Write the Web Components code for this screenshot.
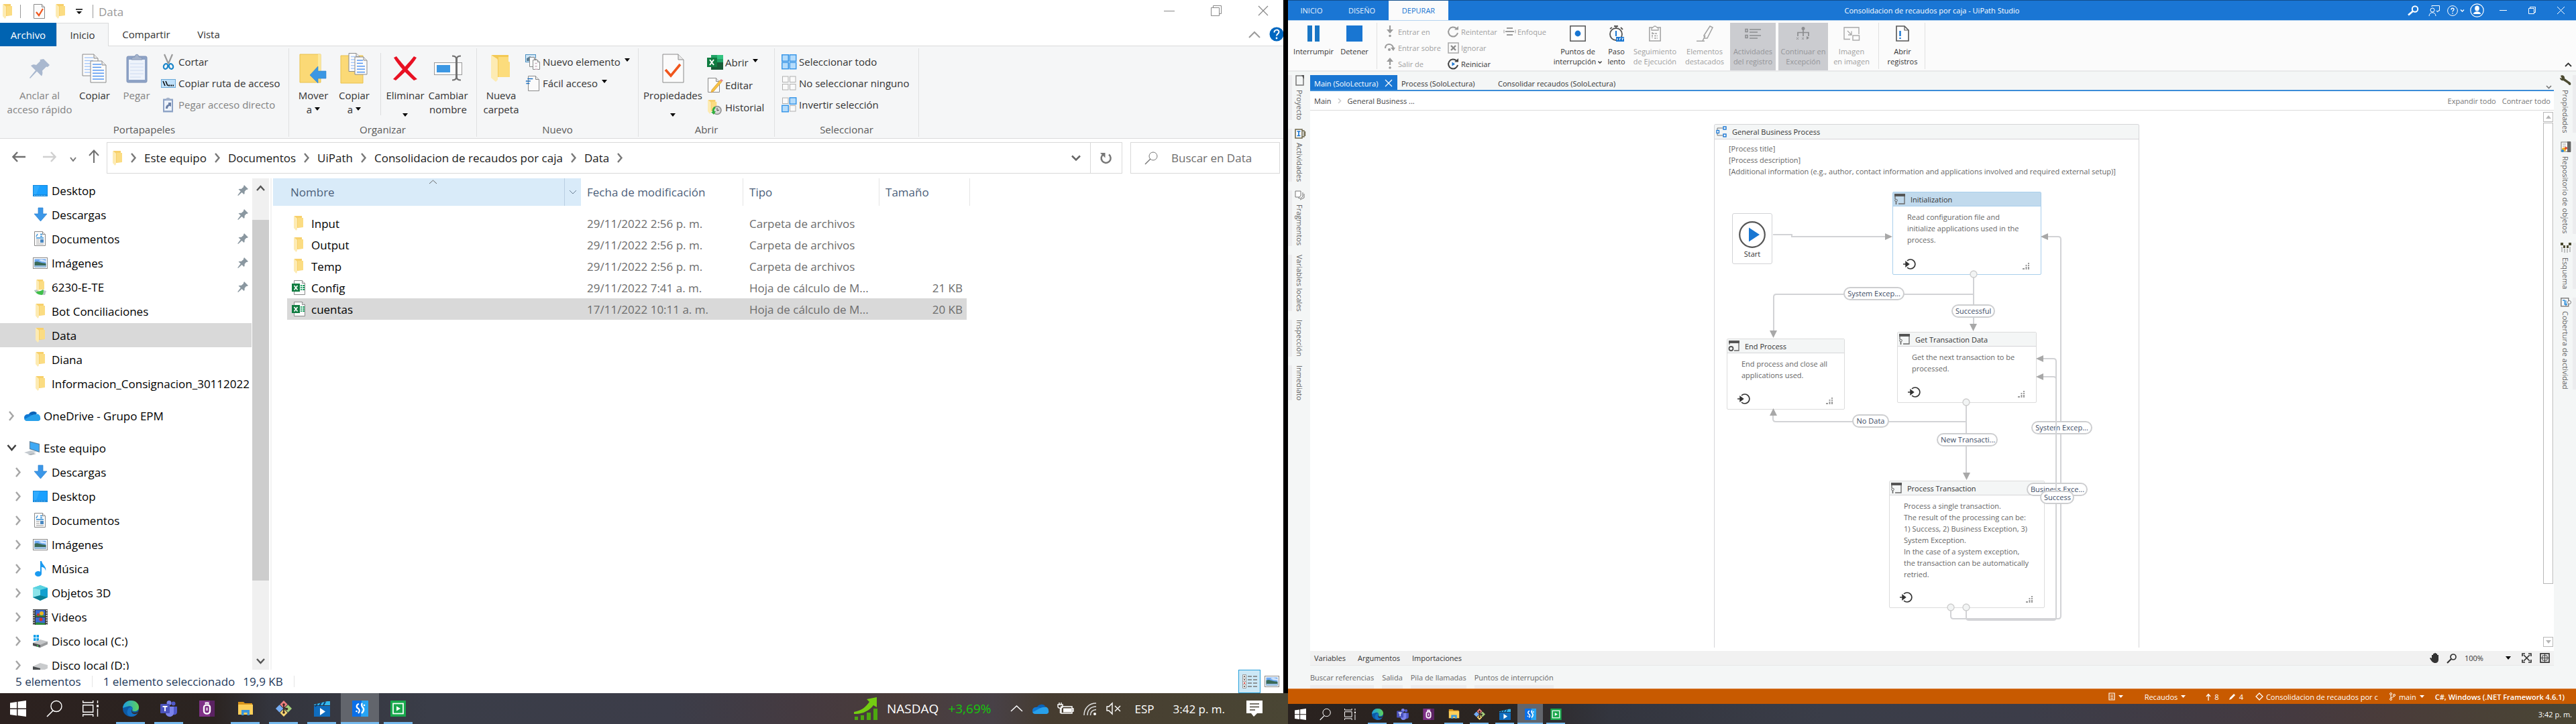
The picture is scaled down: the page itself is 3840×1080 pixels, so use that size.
<!DOCTYPE html>
<html lang="es">
<head>
<meta charset="utf-8">
<title>Data</title>
<style>
html,body{height:100%}
body{margin:0;background:#000;font-family:"Open Sans","Noto Sans",sans-serif;font-size:17px;overflow:hidden}
</style>
</head>
<body>
<desk-top>
  <explorer-window></explorer-window>
  <task-bar slot="bar1"></task-bar>
  <studio-window slot="right"></studio-window>
  <task-bar slot="bar2" small></task-bar>
</desk-top>
<script>
/* ---------- icons ---------- */
const page=(x,y,w,h,f,c='#3b8df0',n=0)=>{
  let s=`<path d="M${x} ${y}h${w-f}l${f} ${f}v${h-f}h-${w}z" fill="#fbfbfb" stroke="#8a8a8a"/><path d="M${x+w-f} ${y}v${f}h${f}" fill="#e8e8e8" stroke="#8a8a8a"/>`;
  for(let i=0;i<n;i++)s+=`<path d="M${x+3} ${y+5+i*4.4}h${i<2?w-f-4:w-6}" stroke="${c}" stroke-width="1.4"/>`;
  return s};
const folder=(x,y,k=1)=>`<g transform="translate(${x} ${y}) scale(${k})"><path d="M1 0h11v3l1 1 1 13-9 1z" fill="#f7d06b"/><path d="M6 3h8v14H6z" fill="#fbdc82"/><path d="M0 0l4 3c1 .6 1 1 1 2v15l-1.600 2L0 18z" fill="#fdebb3"/></g>`;
const x10=`<path d="M1 1l14 14M15 1L1 15" stroke="#888" stroke-width="1.200" fill="none"/>`;
const chevR=(c,w=2.4)=>`<path d="M1 1l5.500 6.500L1 14" fill="none" stroke="${c}" stroke-width="${w}"/>`;
const ICONS={
 folder:[15,22,folder(0,0)],
 folderBig:[32,42,`<path d="M2 1h25v10l2 1v22h-19z" fill="#f3c955"/><path d="M12 4h15v7l2 1v22H12z" fill="#fcdc7c"/><path d="M1 1l8 5c2 1 2 2 2 4v28l-3 3-7-6z" fill="#fdebb3"/>`],
 docCheck:[18,23,page(.5,.5,16,21,4)+`<path d="M4 12l4 5 6-10" fill="none" stroke="#f0561d" stroke-width="2.200"/>`],
 customize:[10,8,`<path d="M0 1h10" stroke="#000" stroke-width="1.500"/><path d="M1 4h8l-4 4z" fill="#000"/>`],
 winMin:[16,16,`<path d="M0 8.500h16" stroke="#888"/>`],
 winMax:[16,16,`<path d="M.5 3.500h12v12H.5zM3.500 3.500v-3h12v12h-3" fill="none" stroke="#888"/>`],
 winClose:[16,16,x10],
 chevUp:[18,11,`<path d="M1 10l8-8 8 8" fill="none" stroke="#9a9a9a" stroke-width="2"/>`],
 help:[22,22,`<circle cx="11" cy="11" r="10.500" fill="#0067c0"/><path d="M7.500 8.500c0-5 7-5 7-1 0 3-3.500 3-3.500 6" stroke="#fff" stroke-width="2" fill="none"/><circle cx="11" cy="17" r="1.400" fill="#fff"/>`],
 pinBig:[32,32,`<path d="M22 1l9 9-3 3-2-.5-6 6c1 4 0 6-1 8l-7-7L2 30l-1-1 9-11-7-7c3-2 5-2 8-1l6-6-.5-2z" transform="translate(0 1)" fill="#a9b8cf"/>`],
 copyBig:[38,44,page(1,1,23,32,6,'#a6c8fa',6)+page(13,11,23,32,6,'#4a90f0',6)],
 paste:[32,44,`<rect x="1" y="4" width="30" height="39" rx="2" fill="#8ea3c6" stroke="#7d92b7"/><rect x="4" y="9" width="24" height="30" fill="#eef3fb"/><path d="M6 15h20M6 20h20M6 25h20M6 30h20M6 35h16" stroke="#cddaf0"/><path d="M8 9c0-4 3-4 5-4 0-5 6-5 6 0 2 0 5 0 5 4z" fill="#a6b4cc" stroke="#8497b8"/>`],
 cut:[18,23,`<path d="M3 0l6 14M15 0L9 14" stroke="#9a9a9a" stroke-width="2.200"/><ellipse cx="5" cy="18" rx="3" ry="4" fill="none" stroke="#1a85c9" stroke-width="2.200" transform="rotate(20 5 18)"/><ellipse cx="13" cy="18" rx="3" ry="4" fill="none" stroke="#1a85c9" stroke-width="2.200" transform="rotate(-20 13 18)"/>`],
 copyPath:[22,13,`<rect x=".5" y=".5" width="21" height="12" fill="#bfe0fa" stroke="#6aa9d8"/><path d="M3 3l3 7M7 3l3 7" stroke="#000" stroke-width="1.500"/><path d="M11 9.500h8" stroke="#000" stroke-width="1.800" stroke-dasharray="2 1.200"/>`],
 pasteLink:[18,23,`<rect x="1" y="2.500" width="15" height="20" fill="#8ea3c6"/><rect x="3" y="5" width="11" height="15" fill="#eef3fb"/><path d="M5.500 2.500C5.500 0 11.500 0 11.500 2.500V4.500h-6z" fill="#a6b4cc"/><path d="M5 17c0-4 2-6 4-6V8h4v6l-2-1c-2 0-3 2-3 4z" fill="#6b80a6"/>`],
 moveTo:[42,44,`<path d="M1 1h31v42H1z" fill="#fbd976" stroke="#e9c14d"/><path d="M28 1h4v25h-4z" fill="#fce89c"/><path d="M40 27H28v-7L16 33l12 12v-7h12z" transform="translate(0 -1)" fill="#3b97e3" stroke="#2b83cf" stroke-width=".6"/>`],
 copyTo:[42,46,`<path d="M1 4h33v41H1z" fill="#fbd976" stroke="#e9c14d"/>`+page(13,.5,16,27,5,'#a6c8fa',5)+page(22,6,18,26,5,'#4a90f0',5)],
 del:[38,38,`<path d="M2 3l4-2c5 7 20 24 31 34l-5 2C22 28 9 15 2 3z" fill="#e81123"/><path d="M36 3l-4-2C26 9 12 24 1 35l4 2C16 28 30 13 36 3z" fill="#e81123"/>`],
 rename:[42,40,`<rect x=".5" y="11.500" width="41" height="18" fill="#fbfbfb" stroke="#9a9a9a"/><rect x="4" y="15" width="20" height="11" fill="#3b97e3"/><path d="M27 1.500c4 0 6 1 6 4v28c0 3-2 4-6 4M40 1.500c-4 0-6 1-6 4v28c0 3 2 4 6 4" stroke="#707070" stroke-width="2" fill="none"/>`],
 newItem:[22,23,`<rect x=".5" y=".5" width="15" height="11" fill="#cfe6f7" stroke="#4a8fc0"/><path d="M2 10V6l5-3 7 5v2z" fill="#5b7f95"/>`+page(6.5,4.500,10,14,3)+page(11.5,8.500,10,14,3,'#c8a8b8',3)],
 easy:[20,23,page(3.5,.5,16,22,5)+`<path d="M2 4.500h8M0 8h7M1 11.500h5" transform="skewX(-8) translate(1)" stroke="#1a6fc0" stroke-width="1.600"/>`],
 propsBig:[33,44,page(1,1,31,42,8)+`<path d="M5 24l8 9 14-17" fill="none" stroke="#f0561d" stroke-width="3.600"/>`],
 excelBig:[24,22,`<path d="M6 0h18v22H6z" fill="#21a366"/><path d="M15 0h9v6h-9z" fill="#33c481"/><path d="M15 6h9v5h-9z" fill="#21a366"/><path d="M6 11h9v6H6z" fill="#107c41"/><path d="M15 11h9v11h-9zM6 16h18v6H6z" fill="#185c37"/><rect y="4" width="15" height="14" fill="#107c41"/><path d="M4 7l6 8M10 7l-6 8" stroke="#fff" stroke-width="2"/>`],
 edit:[22,22,page(.5,.5,17,21,5)+`<path d="M18 4l3 2L9 20l-4 2 1-4z" fill="#f6c445" stroke="#d9912a" stroke-width=".7"/><path d="M18 4l2-2 3 2-2 2z" fill="#e58a8a"/>`],
 history:[22,22,folder(0,0,.95)+`<circle cx="14" cy="15.500" r="6" fill="#d8d8d8" stroke="#8a8a8a" stroke-width="1.500"/><path d="M14 12v4l3-1" stroke="#444" fill="none"/><path d="M10 10c-3 2-4 5-3 8l-2 0 4 4 3-5h-2c-1-2 0-4 2-5z" fill="#2fae3c"/>`],
 selAll:[22,22,[[0,0],[11.5,0],[0,11.5],[11.5,11.5]].map(([x,y])=>`<rect x="${x+.75}" y="${y+.75}" width="9.500" height="9.500" fill="#b5dcfb" stroke="#3a97e8" stroke-width="1.500"/>`).join('')],
 selNone:[22,22,[[1,0],[12,0],[1,11.5],[12,11.5]].map(([x,y])=>`<rect x="${x+.5}" y="${y+1}" width="8.500" height="8.500" fill="#fafafa" stroke="#b0b0b0"/>`).join('')],
 selInv:[22,22,[[1,0,0],[11.5,0,1],[0,11.5,1],[12,11.5,0]].map(([x,y,s])=>s?`<rect x="${x+.75}" y="${y+.75}" width="9.500" height="9.500" fill="#b5dcfb" stroke="#3a97e8" stroke-width="1.500"/>`:`<rect x="${x+.5}" y="${y+1}" width="8.500" height="8.500" fill="#fafafa" stroke="#b0b0b0"/>`).join('')],
 back:[20,16,`<path d="M1 8h19M8 1L1.500 8 8 15" fill="none" stroke="#707070" stroke-width="2.500"/>`],
 fwd:[20,16,`<path d="M0 8h19M12 1l6.500 7-6.500 7" fill="none" stroke="#d0d0d0" stroke-width="2.500"/>`],
 navDown:[10,8,`<path d="M1 1l4 5 4-5" fill="none" stroke="#777" stroke-width="2"/>`],
 navUp:[16,20,`<path d="M8 20V2M1 9l7-7.500L15 9" fill="none" stroke="#707070" stroke-width="2"/>`],
 crumb:[8,15,chevR('#777')],
 boxDown:[14,10,`<path d="M1 1.500l6 6 6-6" fill="none" stroke="#666" stroke-width="2.500"/>`],
 refresh:[18,18,`<path d="M13 3.500a7 7 0 1 1-8-.5" fill="none" stroke="#777" stroke-width="2.500"/><path d="M0 1h7.500v7.500z" fill="#777"/>`],
 search:[19,19,`<circle cx="12" cy="7" r="6" fill="none" stroke="#777"/><path d="M8 11l-8 8" stroke="#777" stroke-width="1.400"/>`],
 desktop:[22,17,`<rect width="22" height="17" fill="#1288dd"/><rect x="1" y="1" width="20" height="13" fill="#1aa0ff"/><path d="M1 1h9L5 14H1z" fill="#2fabff"/><path d="M2 15.500h18" stroke="#bfe4ff" stroke-dasharray="1 1.500"/>`],
 down:[19,20,`<path d="M6 0h7v9h6l-9.500 11L0 9h6z" fill="#3b97e8" stroke="#2a7fcf" stroke-width=".7"/>`],
 docs:[18,23,page(.5,.5,16,21,4)+`<path d="M5 4l-2 4M9 4.500h3M9 7.500h3M3 10h11" stroke="#2a8ad6" stroke-width="1.300"/><path d="M3 13h5M3 16h5M3 19h11" stroke="#999" stroke-width="1.200"/><rect x="9" y="12" width="5" height="5" fill="#4a88c0"/>`],
 images:[22,17,`<rect x=".5" y=".5" width="21" height="16" fill="#fff" stroke="#8a8a8a"/><rect x="2.500" y="2.500" width="17" height="12" fill="#6fa8ef"/><path d="M2.500 7c5-2 6 1 17 2v5.500h-17z" fill="#3a6a58"/><path d="M2.500 12h17v2.500h-17z" fill="#9fc3ea"/><path d="M9 4c4-2 8 0 10.500 1v2c-4-1-7 0-10.500-3z" fill="#d9e9fb"/>`],
 netFolder:[18,23,folder(3,0,.85)+`<path d="M0 16c5 2 9 2 13-1l3 3-4 5c-4 0-7-1-9-3z" fill="#3fbf4a"/><path d="M0 16l4-1 2 2-3 2zM14 16l4 1-2 6h-3z" fill="#b9c3c8"/>`],
 music:[17,23,`<ellipse cx="5" cy="19" rx="5" ry="4" fill="#1a9af0"/><path d="M8 0h2c1 6 8 8 6 15 0-4-3-6-6-6v10H8z" fill="#1a9af0"/>`],
 cube:[22,23,`<path d="M0 4l11-4 11 4v14l-11 5L0 18z" fill="#35c3d9"/><path d="M11 6l11-2v14l-11-3z" fill="#12a0cf"/><path d="M0 4l11 2v9L0 18z" fill="#8be4ea"/><path d="M0 4l11-4 11 4-11 3z" fill="#59d2e0"/><path d="M0 18l11-3 11 3-11 5z" fill="#0a7f94"/>`],
 videos:[22,23,`<rect width="22" height="23" fill="#333"/><path d="M1.500 1v22M20.500 1v22" stroke="#ddd" stroke-width="2" stroke-dasharray="2 1.500"/><rect x="4" y="1" width="14" height="10" fill="#3a6ad0"/><rect x="4" y="12" width="14" height="11" fill="#3a6ad0"/><path d="M4 9c4-3 7 1 14 0v2H4zM4 20c4-2 8 1 14 0v3H4z" fill="#2f8a3e"/><circle cx="13" cy="6" r="3" fill="#e8b81f"/><circle cx="8" cy="8" r="2" fill="#d2332a"/><circle cx="12" cy="15" r="2.500" fill="#d2332a"/>`],
 diskC:[23,19,`<path d="M1 0h3.500v4H1zM5.500 0H9v4H5.500zM1 5h3.500v4H1zM5.500 5H9v4H5.500z" fill="#12a0ea"/><path d="M0 12l11-5 11 3v4l-11 5-11-3z" fill="#c4c6c8"/><path d="M0 12l11 3v4L0 16z" fill="#4a4d4f"/><path d="M11 15l11-5v4l-11 5z" fill="#9a9c9e"/><path d="M7 15.500v2" stroke="#3fe05a" stroke-width="1.600"/>`],
 diskD:[23,19,`<path d="M0 11l11-5 11 3v5l-11 5-11-3z" fill="#c9cbcd"/><path d="M0 11l11 3v5L0 16z" fill="#4a4d4f"/>`],
 pin:[16,16,`<path d="M10 0l6 6-2 1-1 0-2.500 3c.5 2 0 3-.8 4L6.500 11 1 16l-.8-.8L4.700 9.300 1.500 6.500C3 5.500 4 5.500 5.500 6L9 3l0-1z" fill="#8a97a0"/>`],
 oneDrive:[25,16,`<path d="M7 6a7 6 0 0 1 12-2L14 12 3 9z" fill="#0a63b8"/><path d="M5 6c6-1 9 3 12 6l-6 4H5A5 5 0 0 1 5 6z" fill="#0f78d4"/><path d="M17 6a5 5 0 0 1 7 5c1 3-1 5-4 5H4c-2 0-3-1-4-3 6-1 10-7 17-7z" fill="#28a0ea"/>`],
 pc:[24,21,`<path d="M8 0l15 4v13L8 12z" fill="#5a7e9a"/><path d="M9 1.500l13 3.500v10.500L9 11z" fill="#3fa9f5"/><path d="M0 17l10-3 8 2-9 4z" fill="#c5cbd0"/><path d="M5 20l9-2 4 1-8 2z" fill="#a9b0b5"/>`],
 treeR:[9,15,chevR('#a5a5a5')],
 treeD:[15,10,`<path d="M1.500 1l6 7 6-7" fill="none" stroke="#404040" stroke-width="2.600"/>`],
 sbUp:[13,9,`<path d="M1 8l5.500-6L12 8" fill="none" stroke="#555" stroke-width="2.400"/>`],
 sbDown:[13,9,`<path d="M1 1l5.500 6L12 1" fill="none" stroke="#555" stroke-width="2.400"/>`],
 sortUp:[13,7,`<path d="M1 6l5.500-5L12 6" fill="none" stroke="#666"/>`],
 sortDown:[12,7,`<path d="M1 1l5 5 5-5" fill="none" stroke="#6a7f95"/>`],
 excel:[21,22,page(3.5,.5,16,21,4)+`<rect x="0" y="5" width="12" height="12" fill="#107c41"/><path d="M3.500 8l5 6.500M8.500 8l-5 6.500" stroke="#fff" stroke-width="1.600"/><path d="M13 8h2M16 8h3M13 11h2M16 11h3M13 14h2M16 14h3" stroke="#21a366" stroke-width="1.800"/>`],
 caret:[8,5,`<path d="M0 0h8L4 5z" fill="#000"/>`],
 viewList:[22,22,`<path d="M.5.500h5v5h-5zM.5 5.500h5v5h-5zM.5 10.500h5v5h-5zM.5 15.500h5v5h-5z" fill="#fff" stroke="#999"/><path d="M2 3h2M2 8h2M2 18h2" stroke="#666" stroke-width="2"/><path d="M2 13h2" stroke="#c33" stroke-width="2"/><path d="M8 3h14M8 8h14M8 13h14M8 18h14" stroke="#777" stroke-width="1.300" stroke-dasharray="6 2"/>`],
 /* taskbar */
 win:[24,24,`<path d="M0 3.500L10 2v9.500H0zM11.500 1.800L24 0v11.500H11.500zM0 13h10v9.500L0 21zM11.500 13H24v11l-12.500-1.700z" fill="#fff"/>`],
 tSearch:[24,24,`<circle cx="15" cy="8.500" r="8" fill="none" stroke="#fff" stroke-width="1.400"/><path d="M10 15L1 24" stroke="#fff" stroke-width="1.600"/>`],
 taskView:[24,24,`<path d="M.7 0v3h15V0M.7 24v-3h15v3M.7 6.700h15v10.600H.700zM22.500 0v4M22.500 12v12" fill="none" stroke="#fff" stroke-width="1.400"/><rect x="21" y="6.500" width="3" height="3.500" fill="#fff"/>`],
 edge:[24,24,`<defs><linearGradient id="a"><stop stop-color="#1b9de2"/><stop offset="1" stop-color="#5fd35a"/></linearGradient></defs><circle cx="12" cy="12" r="12" fill="#0c59a4"/><path d="M0 11C1 4 6 0 12 0c8 0 12 5 12 10 0 4-3 6-6.500 6-3 0-4-1-3-3 1-4-4-6-8-4-4 1-6 2-6.500 2z" fill="url(#a)"/><path d="M14 15c0 4 5 6 9 3-2 3-5 6-10 6-4 0-8-4-6-9 1-4 3-5 6-5 2 1 1 2 1 5z" fill="#1470c4"/><path d="M14 13c-1 3 0 5 4 5 2 0 4-1 5-2l-1 3c-3 2-10 2-9-5z" fill="#35302f"/>`],
 teams:[25,24,`<circle cx="19.500" cy="4.500" r="3" fill="#5059c9"/><circle cx="13" cy="3.500" r="3.500" fill="#7b83eb"/><path d="M16 9h9v8c0 4-4 5-6 4z" fill="#5059c9"/><path d="M8 9h12v9c0 8-11 8-12 1z" fill="#7b83eb"/><rect y="5" width="14" height="14" rx="1" fill="#4b53bc"/><path d="M3.500 9h7M7 9v7" stroke="#fff" stroke-width="1.900"/>`],
 purple:[23,24,`<rect width="23" height="24" fill="#7f3187"/><path d="M16 0h7v24h-7z" fill="#5b2262"/><path d="M7 10v5.500c0 5.500 9 5.500 9 0V10c0-4.500-9-4.500-9 0z" fill="none" stroke="#fff" stroke-width="2.400"/><path d="M9.500 5.500V3.500h4v2M11.500 10.500v4.500" fill="none" stroke="#fff" stroke-width="1.800"/>`],
 tFolder:[24,20,`<path d="M1 0h8l2 2h11v4H1z" fill="#d9941a"/><rect x="1" y="4" width="22" height="15" fill="#fccf5a"/><path d="M6 20v-8h12v8h-3.500v-4h-5v4z" fill="#3a96dd"/>`],
 git:[24,24,`<g transform="rotate(45 12 12)"><rect x="3.500" y="3.500" width="8" height="8" fill="#f08080"/><rect x="12.500" y="3.500" width="8" height="8" fill="#a5cf7a"/><rect x="3.500" y="12.500" width="8" height="8" fill="#77aef5"/><rect x="12.500" y="12.500" width="8" height="8" fill="#f7d774"/></g><path d="M12 5v14M12 10l5 4" stroke="#3b2a26" stroke-width="1.800"/><circle cx="12" cy="6" r="1.800" fill="#3b2a26"/><circle cx="12" cy="18" r="1.800" fill="#3b2a26"/><circle cx="16.500" cy="12.500" r="1.800" fill="#3b2a26"/>`],
 clip:[24,24,`<path d="M0 8h24v16H0z" fill="#0f6cbd"/><path d="M0 6L20 1l4 0v6H0z" fill="#35b8ee"/><path d="M5 5l-3 4M11 3l-3 5M17 2l-3 5" stroke="#0a3f73" stroke-width="2"/><path d="M9 11v11l8-5.500z" fill="#fff"/>`],
 studio:[24,24,`<rect width="24" height="24" fill="#0a6fe8"/><path d="M14 0h10v24H13z" fill="#27a4f2"/><path d="M10 5c-4 1-4 5-1.500 6.500s3.500 4 .5 7.500" fill="none" stroke="#fff" stroke-width="2.300"/><path d="M15 4c-3 4 1 5.500 2 8 1 3-1 5-3 7" fill="none" stroke="#fff" stroke-width="2.300"/><circle cx="6.500" cy="16" r="1.300" fill="#fff"/><circle cx="18" cy="7" r="1.300" fill="#fff"/>`],
 assistant:[23,24,`<rect width="23" height="24" fill="#18a84c"/><rect x="4" y="4.500" width="15" height="15" fill="none" stroke="#fff" stroke-width="1.700"/><path d="M9 8.500v7l6-3.500z" fill="#fff"/>`],
 stock:[35,34,`<path d="M0 22c12-2 18-8 23-15l-4-4 15-3v15l-5-3C23 20 12 26 0 25z" fill="#74cc12"/><path d="M1 29h5v5H1zM10 27h5v7h-5zM19 23h6v11h-6zM29 17h6v17h-6z" fill="#4da80f"/>`],
 tUp:[19,10,`<path d="M1 9l8.500-8L18 9" fill="none" stroke="#fff" stroke-width="1.500"/>`],
 batt:[25,18,`<path d="M6 6h16v10H6zM22 9h2v4h-2" fill="none" stroke="#fff" stroke-width="1.500"/><rect x="9" y="8.500" width="12" height="6" fill="#fff"/><path d="M1 3h7v3c0 3-7 3-7 0zM3 0v3M6 0v3M4.500 9v7" fill="none" stroke="#fff" stroke-width="1.400"/>`],
 wifi:[20,19,`<path d="M1 19C1 9 8 1 19 1M6 19c0-8 5-13 13-13M10.500 19c0-5 3-8 8.500-8.500" fill="none" stroke="#ddd" stroke-width="1.500"/><circle cx="17" cy="17" r="2" fill="#fff"/>`],
 mute:[22,18,`<path d="M1 6h3l5-5v16l-5-5H1z" fill="none" stroke="#fff" stroke-width="1.400"/><path d="M13 5l8 8M21 5l-8 8" stroke="#fff" stroke-width="1.400"/>`],
 notif:[24,24,`<path d="M0 0h24v19h-8l-5 5-4-5H0z" fill="#fff"/><path d="M5 5h14M5 9.500h14M5 14h8" stroke="#4a4438" stroke-width="1.500"/>`],
 /* studio */
 pause:[18,24,`<path d="M0 0h7v24H0zM11 0h7v24h-7z" fill="#1976c5"/>`],
 stop:[24,24,`<rect width="24" height="24" fill="#1976d2"/>`],
 stepIn:[14,18,`<path d="M7 0v8" stroke="#9b9b9b" stroke-width="2.200"/><path d="M2 6h10l-5 6z" fill="#9b9b9b"/><circle cx="7" cy="15.500" r="1.800" fill="#9b9b9b"/>`],
 stepOver:[16,14,`<path d="M1 8c0-8 11-8 12 0" stroke="#9b9b9b" stroke-width="2.200" fill="none"/><path d="M9 7h7l-3 5z" fill="#9b9b9b"/><circle cx="7" cy="10" r="2" fill="#9b9b9b"/>`],
 stepOut:[14,18,`<path d="M7 4v7" stroke="#9b9b9b" stroke-width="2.200"/><path d="M2 6h10L7 0z" fill="#9b9b9b"/><circle cx="7" cy="15" r="1.800" fill="#9b9b9b"/>`],
 retry:[17,17,`<path d="M15 10a7 7 0 1 1-2-6.500" fill="none" stroke="#9b9b9b" stroke-width="2"/><path d="M10 5.500h6V0z" fill="#9b9b9b"/>`],
 ignore:[17,17,`<rect x="1" y="1" width="15" height="15" fill="none" stroke="#a8a8a8" stroke-width="1.500"/><path d="M5 5l7 7M12 5l-7 7" stroke="#8b8b8b" stroke-width="2.400"/>`],
 restart:[17,17,`<path d="M15 10a7 7 0 1 1-2-6.500" fill="none" stroke="#444" stroke-width="2"/><path d="M10 5.500h6V0z" fill="#444"/><path d="M6.500 5.500v6l4.500-3z" fill="#1976d2"/>`],
 focus:[17,12,`<path d="M4 1h9M4 11h9M2 6h13" stroke="#9b9b9b" stroke-width="2"/><path d="M0 3.500v5M17 3.500v5" stroke="#9b9b9b"/>`],
 bp:[24,24,`<rect x=".8" y=".8" width="22.400" height="22.400" fill="#fff" stroke="#555" stroke-width="1.500"/><circle cx="12" cy="12" r="4.400" fill="#1976d2"/>`],
 slow:[23,24,`<circle cx="11" cy="13" r="9" fill="none" stroke="#555" stroke-width="1.800"/><path d="M8 1h6M11 1v4M2 5l3-2M18 3l3 3" stroke="#555" stroke-width="1.800"/><path d="M11 8v8" stroke="#1976d2" stroke-width="2"/><rect x="11" y="17" width="12" height="7" fill="#1976d2"/><path d="M13 19v3M16.500 22v-3h2M20.500 22v-3h2" stroke="#fff" fill="none"/>`],
 trail:[18,24,`<rect x=".8" y="3" width="16.400" height="20" fill="none" stroke="#a3a3a3" stroke-width="1.500"/><path d="M4 7V4c3 0 2-3 5-3s2 3 5 3v3z" fill="#fbfbfb" stroke="#a3a3a3" stroke-width="1.300"/><path d="M5 10v9M5 12h8M8 15.500h5M8 19h5" stroke="#a3a3a3" stroke-width="1.500" stroke-dasharray="3 1"/>`],
 marker:[24,24,`<path d="M20 1l4 2-8 16h-4l-1-4zM13 15l-4 8M0 23.300h12" fill="none" stroke="#a3a3a3" stroke-width="1.500"/>`],
 logs:[24,16,`<path d="M1 1.500h3v4H1zM1 10.500h3v4H1z" fill="none" stroke="#8b8c8f" stroke-width="1.500"/><path d="M7 2h17M7 6h12M7 11h17M7 15h12" stroke="#8b8c8f" stroke-width="1.600"/>`],
 contEx:[20,20,`<circle cx="10" cy="2.500" r="2.500" fill="#8b8c8f"/><path d="M10 4v10M2 14V8.500h16V14" stroke="#8b8c8f" stroke-width="1.700" fill="none"/><path d="M0 16l3 3M3 16l-3 3M8 16l3 3M11 16l-3 3" stroke="#8b8c8f"/><path d="M15 14v5l4-2.500z" fill="#8b8c8f"/>`],
 pip:[24,21,`<path d="M10 18.500H1V1h22v10" fill="none" stroke="#a8a8a8" stroke-width="1.400"/><rect x="14" y="13" width="9.500" height="7" fill="none" stroke="#a8a8a8" stroke-width="1.400"/><path d="M6 6l6 6M12 6.500V12H7" fill="none" stroke="#a8a8a8" stroke-width="1.300"/>`],
 openLogs:[20,24,`<path d="M1 1h12l6 6v16H1z" fill="#fff" stroke="#555" stroke-width="1.600"/><path d="M13 1v6h6" fill="none" stroke="#555" stroke-width="1.200"/><path d="M6.500 8v8M6.500 18v2" stroke="#1976d2" stroke-width="2.400"/>`],
 sSearch:[17,15,`<circle cx="11" cy="5.500" r="4.200" fill="none" stroke="#fff" stroke-width="2"/><path d="M8 8.500l-7 6" stroke="#fff" stroke-width="2.600"/>`],
 feedback:[17,16,`<circle cx="6" cy="7" r="3" fill="none" stroke="#fff"/><path d="M1 16c0-7 10-7 10 0M5 2V.500h11.500V8H14v2l-2.500-2" fill="none" stroke="#fff"/>`],
 sHelp:[26,16,`<circle cx="8" cy="8" r="7.400" fill="none" stroke="#fff"/><path d="M6 6.500c0-3 4-3 4-.5 0 1.500-2 1.500-2 3.500M8 11v1.500" stroke="#fff" stroke-width="1.400" fill="none"/><path d="M20 6.500l2.500 2.500 2.500-2.500" stroke="#fff" stroke-width="1.400" fill="none"/>`],
 avatar:[21,21,`<circle cx="10.500" cy="10.500" r="9.700" fill="none" stroke="#fff" stroke-width="1.200"/><ellipse cx="10.500" cy="7.500" rx="3.300" ry="4" fill="#fff"/><path d="M5 16c0-5 11-5 11 0z" fill="#fff"/>`],
 sMin:[11,11,`<path d="M0 5.500h11" stroke="#fff"/>`],
 sMax:[11,11,`<path d="M.5 2.500h8v8h-8zM2.500 2.500v-2h8v8h-2" fill="none" stroke="#fff"/>`],
 sClose:[11,11,`<path d="M0 0l11 11M11 0L0 11" stroke="#fff"/>`],
 sChevUp:[11,7,`<path d="M1 6l4.500-4.500L10 6" fill="none" stroke="#333" stroke-width="1.800"/>`],
 sChevDown:[9,6,`<path d="M1 1l3.500 3.500L8 1" fill="none" stroke="#777" stroke-width="1.600"/>`],
 tinyDown:[6,4,`<path d="M.5.500l2.500 2.500 2.500-2.500" fill="none" stroke="#333" stroke-width="1.400"/>`],
 sCrumb:[6,9,`<path d="M1 1l3.500 3.500L1 8" fill="none" stroke="#ccc" stroke-width="1.600"/>`],
 tabX:[10,10,`<path d="M0 0l10 10M10 0L0 10" stroke="#fff" stroke-width="1.200"/>`],
 project:[13,16,`<path d="M1 1h11v14H1z" fill="none" stroke="#777" stroke-width="1.500"/><path d="M9 0h4v6z" fill="#555"/>`],
 activities:[16,15,`<rect x="1" y="1" width="10" height="13" fill="#fff" stroke="#6b6548" stroke-width="1.500"/><path d="M3.500 4l5 0M6 4v6M3.500 10.500h5" stroke="#1976d2" stroke-width="1.700"/><path d="M11 3h3v9h-3M15.500 4v7" fill="none" stroke="#6b6548" stroke-width="1.300"/>`],
 snippets:[16,15,`<path d="M1 1h8v7l-2 2H1z" fill="#fff" stroke="#777"/><path d="M5 11l4 1 3-3V3M8 14l6-3V5" fill="none" stroke="#777"/>`],
 wrench:[17,16,`<path d="M1 1c3-2 7 1 6 4l7 5c3 1 3 5 1 5s-2-2-4-3L5 8C2 9 0 6 0 4l3 1z" fill="#4b4a30"/>`],
 repo:[16,16,`<rect x="1" y="1" width="14" height="14" fill="#fff" stroke="#777"/><path d="M10 0h5v16h-5z" fill="#666"/><path d="M3 4h5M3 7h5" stroke="#999"/><circle cx="5" cy="12" r="3" fill="#f0b429"/><circle cx="8" cy="10" r="2" fill="#e2492f"/><circle cx="3" cy="14" r="2" fill="#2a8ad6"/>`],
 outline:[16,16,`<path d="M0 0h4v4H0zM12 0h4v4h-4zM4 4h3v4H4zM9 4h3v4H9z" fill="#4b4a30"/><path d="M2 6v8M6 9v6M10 9v6M14 6v8" stroke="#888"/>`],
 coverage:[16,14,`<rect x=".8" y=".8" width="11" height="12" fill="#fff" stroke="#777" stroke-width="1.400"/><path d="M3 4h3v6h4M8 4v8" stroke="#2a8ad6" fill="none" stroke-width="1.300"/><circle cx="13" cy="7" r="2.500" fill="#fff" stroke="#777"/>`],
 proc:[16,17,`<path d="M2 3h8M2 14h8" stroke="#777"/><path d="M2 3v3M2 11v3" stroke="#777"/><rect x="11" y="1" width="4" height="4" fill="#fff" stroke="#1976d2" stroke-width="1.400"/><rect x="11" y="12" width="4" height="4" fill="#fff" stroke="#1976d2" stroke-width="1.400"/><rect x="1" y="6.500" width="3.500" height="4" fill="#fff" stroke="#1976d2" stroke-width="1.300"/>`],
 state:[16,16,`<path d="M1 8V1h14v14H6" fill="none" stroke="#666" stroke-width="1.300"/><path d="M0 0h16v4H0z" fill="#555"/><circle cx="2.500" cy="10" r="1.800" fill="none" stroke="#666"/><path d="M2.500 12v4" stroke="#666" stroke-width="1.600"/>`],
 stateEnd:[16,16,`<path d="M1 6V1h14v14H8" fill="none" stroke="#666" stroke-width="1.300"/><path d="M0 0h16v4H0z" fill="#555"/><circle cx="3.500" cy="12" r="3" fill="none" stroke="#555" stroke-width="1.800"/>`],
 enter:[18,16,`<path d="M6 3a7 7 0 1 1 0 10" fill="none" stroke="#333" stroke-width="1.700"/><path d="M0 8h6M4 4.500L8.500 8 4 11.500z" stroke="#333" stroke-width="1.500" fill="#333"/>`],
 grip:[10,10,`<g fill="#999"><path d="M8 0h2v2H8zM8 3h2v2H8zM4.500 3h2v2h-2zM8 6h2v4H8zM4.500 6h2v4h-2zM0 8h3v2H0z"/></g>`],
 start:[42,42,`<circle cx="21" cy="21" r="18.800" fill="#fff" stroke="#555" stroke-width="2.200"/><path d="M16 10.500v21l16-10.500z" fill="#1976d2"/>`],
 hand:[14,15,`<path d="M3 8V3h2V1h2V0h2v1h2v2h2v7c0 3-2 5-5 5S3 13 0 8l1-1z" fill="#333"/>`],
 zoomI:[14,14,`<circle cx="9" cy="5" r="4" fill="none" stroke="#333" stroke-width="1.700"/><path d="M6 8l-6 6" stroke="#333" stroke-width="2.200"/>`],
 fit:[15,15,`<path d="M1 5V1h4M10 1h4v4M14 10v4h-4M5 14H1v-4M3 3l9 9M12 3l-9 9" fill="none" stroke="#333" stroke-width="1.700"/>`],
 over:[15,15,`<rect x="1" y="1" width="13" height="13" fill="none" stroke="#333" stroke-width="1.700"/><path d="M4 4h7v7H4zM1 7.500h13M7.500 1v13" fill="none" stroke="#333"/>`],
 stCaret:[8,4,`<path d="M0 0h7L3.500 4z" fill="#fff"/>`],
 stDb:[10,12,`<path d="M1 1h8v10H1zM3 4h4M3 6.500h4M3 9h4" fill="none" stroke="#fff" stroke-width="1.200"/>`],
 stUp:[8,11,`<path d="M4 11V2M1 5l3-3.500L7 5" fill="none" stroke="#fff" stroke-width="1.300"/>`],
 stPen:[10,10,`<path d="M0 10l1-3 6-6 2 2-6 6z" fill="#fff"/>`],
 stRepo:[10,10,`<path d="M5 0l5 5-5 5-5-5z" fill="none" stroke="#fff" stroke-width="1.300"/>`],
 stGit:[9,12,`<circle cx="2" cy="2" r="1.500" fill="none" stroke="#fff"/><circle cx="2" cy="10" r="1.500" fill="none" stroke="#fff"/><circle cx="7" cy="4" r="1.500" fill="none" stroke="#fff"/><path d="M2 3.500v5M7 5.500c0 2-5 1-5 3" fill="none" stroke="#fff"/>`],
 sbTri:[8,5,`<path d="M0 5h8L4 0z" fill="#b5b5b5"/>`],
 sbTriD:[8,5,`<path d="M0 0h8L4 5z" fill="#b5b5b5"/>`]
};
const define=(tag,css,html)=>customElements.define(tag,class extends HTMLElement{
  connectedCallback(){
    if(this.shadowRoot)return;
    const t=document.createElement('template');
    t.innerHTML=`<style>*{box-sizing:border-box}button{font:inherit;color:inherit;background:none;border:0;margin:0;padding:0;text-align:inherit}a{color:inherit;text-decoration:none}${css}</style>`+(typeof html==='function'?html(this):html);
    this.attachShadow({mode:'open'}).append(t.content.cloneNode(true));
  }
});
const ic=(n,s)=>`<ui-icon name="${n}"${s?` size="${s}"`:''}></ui-icon>`;

define('ui-icon',`:host{display:inline-flex;flex:none}svg{display:block;overflow:visible}`,el=>{
  const [w,h,s]=ICONS[el.getAttribute('name')];const k=(+el.getAttribute('size')||100)/100;
  return `<svg width="${Math.round(w*k)}" height="${Math.round(h*k)}" viewBox="0 0 ${w} ${h}" aria-hidden="true">${s}</svg>`});

define('desk-top',`:host{display:grid;grid-template-columns:1fr 1fr;height:100%}
 .m{display:flex;flex-direction:column;min-width:0;min-height:0;overflow:hidden}
 .l{flex:1;min-height:0;display:flex;padding-right:7px;background:#000}
 .r{flex:1;min-height:0;display:flex}
 ::slotted(*){min-width:0}`,
 `<div class="m"><div class="l"><slot></slot></div><slot name="bar1"></slot></div><div class="m"><div class="r"><slot name="right"></slot></div><slot name="bar2"></slot></div>`);

/* ---------- task bar ---------- */
define('task-bar',`:host{display:flex;align-items:stretch;height:46px;flex:none;color:#fff;background:linear-gradient(90deg,#2c211f 0,#2b2421 320px,#33343c 400px,#3a3d48 640px,#3c3d49 1000px,#453a40 1200px,#4a3c3a 1340px,#484147 1480px,#463c30 1560px,#4a4634 100%)}
 :host([small]){height:30px;background:linear-gradient(90deg,#2a221f 0,#2b2522 320px,#33353e 480px,#3a3d48 800px,#3c3d49 1100px,#453a40 1500px,#4a3c3a 1640px,#4a4634 100%)}
 nav{display:flex}
 button{display:flex;align-items:center;justify-content:center;width:54px;position:relative}
 .apps{margin-left:4px;display:flex}
 .apps button{width:57px}
 .on::after{content:"";position:absolute;left:7px;right:7px;bottom:0;height:3px;background:#76b9ed}
 .act{background:#62656c}.act::after{left:0;right:0}
 .tray{margin-left:auto;display:flex;align-items:center;padding-right:38px}
 .tray button{width:auto}
 .stock{gap:14px;font-size:19px;margin-right:29px}
 .g{color:#16c60c}
 :host([small]) button{width:37px}:host([small]) .apps{margin-left:3px}:host([small]) .apps button{width:38px}
 :host([small]) .on::after{left:5px;right:5px;height:2px}:host([small]) .act::after{left:0;right:0}
 :host([small]) .tray{font-size:11px;padding-right:6px}:host([small]) .tray button{width:auto}`,
 el=>{const s=el.hasAttribute('small'),k=s?72:100;
 const b=(n,c='',l='')=>`<button class="${c}" aria-label="${l||n}">${ic(n,k)}</button>`;
 return `<nav>${b('win','','Inicio')}${b('tSearch','','Buscar')}${b('taskView','','Vista de tareas')}<div class="apps">${b('edge','on')}${b('teams','on')}${b('purple')}${b('tFolder','on')}${b('git','on')}${b('clip','on')}${b('studio','on act')}${b('assistant','on')}</div></nav>`+
 (s?`<div class="tray"><button>3:42 p. m.</button></div>`:
 `<div class="tray"><button class="stock">${ic('stock')}<span>NASDAQ</span><span class="g">+3,69%</span></button>
 <button style="margin-right:14px" aria-label="Mostrar">${ic('tUp')}</button><button style="margin-right:12px" aria-label="OneDrive">${ic('oneDrive')}</button><button style="margin-right:14px" aria-label="Batería">${ic('batt')}</button><button style="margin-right:14px" aria-label="Red">${ic('wifi')}</button><button style="margin-right:20px" aria-label="Volumen">${ic('mute')}</button><button style="margin-right:28px">ESP</button><button style="margin-right:32px">3:42 p. m.</button><button aria-label="Notificaciones">${ic('notif')}</button></div>`)});

/* ---------- explorer ---------- */
define('ribbon-group',`:host{display:flex;flex-direction:column;width:var(--w);border-right:1px solid #e0e1e2;margin:3px 0 2px}
 .b{flex:1;display:flex;padding-left:var(--p,0)}
 .t{text-align:center;line-height:22px;color:#5a5a5a}`,
 el=>`<div class="b"><slot></slot></div><div class="t">${el.getAttribute('label')}</div>`);
define('big-button',`:host{display:block;width:var(--w)}
 button{display:flex;flex-direction:column;align-items:center;width:100%;text-align:center;padding-top:7px}
 .i{height:46px;display:flex;align-items:center}
 span{line-height:21px;margin-top:7px;white-space:nowrap}
 :host([off]){color:#838383}
 .c{margin-top:5px}
 i ui-icon{vertical-align:middle;margin-left:4px;margin-bottom:4px}`,
 el=>{const [a,b]=el.getAttribute('label').split('|');const m=el.hasAttribute('menu');
 return `<button><div class="i">${ic(el.getAttribute('icon'))}</div><span>${a}${b?`<br>${b}${m?`<i>${ic('caret')}</i>`:''}`:''}</span>${m&&!b?`<div class="c">${ic('caret')}</div>`:''}</button>`});
define('small-button',`:host{display:block;height:var(--h,32px)}
 button{display:flex;align-items:center;height:100%;white-space:nowrap}
 .i{width:26px;display:flex;align-items:center;justify-content:center;margin-right:2px}
 .c{margin-left:6px;margin-bottom:6px;line-height:0}
 :host([off]){color:#838383}`,
 el=>`<button><span class="i">${ic(el.getAttribute('icon'))}</span>${el.getAttribute('label')}${el.hasAttribute('menu')?`<span class="c">${ic('caret')}</span>`:''}</button>`);
define('tree-item',`:host{display:block}
 a{display:flex;align-items:center;height:36px;white-space:nowrap;padding-left:20px}
 .x{width:22px;display:flex;align-items:center;justify-content:flex-start;margin-left:3px}
 .i{width:30px;display:flex;justify-content:center}
 .t{margin-left:2px}
 :host([top]) a{padding-left:10px}:host([top]) .x{margin-left:0;justify-content:center;width:14px}:host([top]) .i{margin-left:9px}
 :host([selected]) a{background:#d9d9d9;margin-right:1px}
 .p{margin-left:auto;margin-right:6px;line-height:0}`,
 el=>{const a=n=>el.getAttribute(n);return `<a href="#"><span class="x">${a('open')!==null?ic('treeD'):a('closed')!==null?ic('treeR'):''}</span><span class="i">${ic(a('icon'))}</span><span class="t">${a('label')}</span>${a('pin')!==null?`<span class="p">${ic('pin')}</span>`:''}</a>`});
define('file-table',`:host{display:block;flex:1;min-width:0;border-left:2px solid #f3f3f3;margin-left:2px;padding-left:2px}
 table{border-spacing:0;table-layout:fixed;width:1039px;text-align:left}
 th{height:41px;font-weight:400;color:#4c607a;padding:0;position:relative;border-right:1px solid #e5e5e5}
 th button{display:block;width:100%;height:41px;padding:0 0 0 9px}
 th.n{background:#d9ebf9;border-color:#b9cfe2}th.n button{padding-left:26px}
 th.f button{padding-left:33px;background:linear-gradient(90deg,#d9ebf9 24px,transparent 24px)}
 .up{position:absolute;left:232px;top:2px;line-height:0}.dn{position:absolute;left:6px;top:17px;line-height:0}
 tbody::before{content:"";display:table-row;height:10px}
 td{height:32px;padding:0 0 0 9px;color:#6d6d6d;white-space:nowrap}
 td.d{padding-left:33px}td.s{text-align:right;padding:0 6px 0 0}
 td.n{color:#000;padding:0 0 0 5px}
 td.n a{display:flex;align-items:center}
 .i{width:25px;display:flex;justify-content:center;margin-right:6px}
 tr.sel td:not(.g){background:#d9d9d9}`,
 ()=>{const r=(i,n,d,t,s,c='')=>`<tr class="${c}"><td class="g"></td><td class="n"><a href="#"><span class="i">${ic(i)}</span>${n}</a></td><td class="d">${d}</td><td>${t}</td><td class="s">${s}</td><td class="g"></td></tr>`;
 return `<table><colgroup><col style="width:21px"><col style="width:414px"><col style="width:266px"><col style="width:203px"><col style="width:130px"><col style="width:5px"></colgroup>
 <thead><tr><th class="n" colspan="2"><button>Nombre</button><span class="up">${ic('sortUp')}</span></th><th class="f"><button>Fecha de modificación</button><span class="dn">${ic('sortDown')}</span></th><th><button>Tipo</button></th><th colspan="2"><button>Tamaño</button></th></tr></thead><tbody>
 ${r('folder','Input','29/11/2022 2:56 p. m.','Carpeta de archivos','')}${r('folder','Output','29/11/2022 2:56 p. m.','Carpeta de archivos','')}${r('folder','Temp','29/11/2022 2:56 p. m.','Carpeta de archivos','')}${r('excel','Config','29/11/2022 7:41 a. m.','Hoja de cálculo de M...','21 KB')}${r('excel','cuentas','17/11/2022 10:11 a. m.','Hoja de cálculo de M...','20 KB','sel')}</tbody></table>`});
define('explorer-window',`:host{display:flex;flex-direction:column;flex:1;min-width:0;background:#fff;color:#000;overflow:hidden}
 .title{display:flex;height:34px;align-items:center;padding-left:4px;color:#999}
 .title .sep{width:1px;height:20px;background:#999}
 .wc{margin-left:auto;display:flex;gap:54px;padding-right:22px}
 .tabs{display:flex;height:35px;font-size:15px;align-items:stretch;border-bottom:1px solid #dadbdc;color:#333}
 .tabs button{padding:0;text-align:center}
 .tabs .f{width:84px;background:#0063b1;color:#fff;margin-bottom:-1px}
 .tabs .on{width:78px;background:#f5f6f7;border:1px solid #dadbdc;border-bottom:0;margin-bottom:-1px}
 .tabs .c{width:112px}.tabs .v{width:74px}
 .hl{margin-left:auto;display:flex;align-items:center;gap:13px;margin-right:-1px}
 .rib{display:flex;height:138px;background:#f5f6f7;border-bottom:1px solid #dadbdc;color:#333;font-size:15px}
 .col{padding-top:4px}
 .vs{width:1px;background:#dcdddf;margin:7px 7px 10px 8px}
 .addr{display:flex;height:47px;margin:5px 0 0 0;padding-right:5px}
 .nav{width:159px;display:flex;align-items:center;padding-left:18px}
 .path{flex:1;display:flex;align-items:center;border:1px solid #d9d9d9;padding-left:8px;color:#1a1a1a;gap:12px}
 .path .e{margin-left:auto;display:flex;align-items:stretch;height:100%}
 .e button{width:47px;display:flex;align-items:center;justify-content:center}
 .e button+button{border-left:1px solid #d9d9d9}.e button:first-child{width:43px}
 .srch{width:223px;margin-left:12px;border:1px solid #d9d9d9;display:flex;align-items:center;padding-left:21px;gap:20px}
 input{font:inherit;border:0;outline:0;padding:0;width:150px;color:#000;background:none}input::placeholder{color:#6d6d6d;opacity:1}
 .main{flex:1;display:flex;min-height:0;margin-top:7px}
 .tree{width:376px;overflow:hidden}
 .gap{height:12px}
 .sb{width:25px;background:#f0f0f0;display:flex;flex-direction:column;align-items:center}
 .sb .u{height:62px;padding-top:10px;line-height:0}.sb .th{height:538px;width:100%;background:#cdcdcd}.sb .d{margin-top:auto;padding-bottom:8px;line-height:0}
 .st{height:35px;display:flex;align-items:center;color:#1e395b;padding:0 6px 0 23px}
 .st i{width:1px;height:17px;background:#e5e5e5;margin:0 16px}
 .vw{margin-left:auto;display:flex;align-items:stretch;height:35px;gap:6px}
 .vw button{display:flex;align-items:center;justify-content:center}.vw .a{width:33px;background:#cce8f6;border:1px solid #26a0da}`,
 ()=>{const T=(i,l,x='')=>`<tree-item icon="${i}" label="${l}" ${x}></tree-item>`;
 const c=n=>`${ic('crumb')}<a href="#">${n}</a>`;
 return `<div class="title">${ic('folder')}<span class="sep" style="margin:0 19px 0 11px"></span>${ic('docCheck')}<span style="width:15px"></span>${ic('folder')}<span style="width:15px"></span>${ic('customize')}<span class="sep" style="margin:0 8px 0 15px"></span><span>Data</span>
 <div class="wc"><button aria-label="Minimizar">${ic('winMin')}</button><button aria-label="Restaurar">${ic('winMax')}</button><button aria-label="Cerrar">${ic('winClose')}</button></div></div>
 <div class="tabs"><button class="f">Archivo</button><button class="on">Inicio</button><button class="c">Compartir</button><button class="v">Vista</button><div class="hl">${ic('chevUp')}${ic('help')}</div></div>
 <div class="rib">
 <ribbon-group label="Portapapeles" style="--w:431px;--p:5px"><big-button off icon="pinBig" label="Anclar al|acceso rápido" style="--w:108px"></big-button><big-button icon="copyBig" label="Copiar" style="--w:56px"></big-button><big-button off icon="paste" label="Pegar" style="--w:69px"></big-button><div class="col"><small-button icon="cut" label="Cortar"></small-button><small-button icon="copyPath" label="Copiar ruta de acceso"></small-button><small-button off icon="pasteLink" label="Pegar acceso directo"></small-button></div></ribbon-group>
 <ribbon-group label="Organizar" style="--w:280px;--p:6px"><big-button menu icon="moveTo" label="Mover|a" style="--w:60px"></big-button><big-button menu icon="copyTo" label="Copiar|a" style="--w:62px"></big-button><div class="vs"></div><big-button menu icon="del" label="Eliminar" style="--w:58px"></big-button><big-button icon="rename" label="Cambiar|nombre" style="--w:70px"></big-button></ribbon-group>
 <ribbon-group label="Nuevo" style="--w:241px;--p:8px"><big-button icon="folderBig" label="Nueva|carpeta" style="--w:56px"></big-button><div class="col" style="padding-left:6px"><small-button menu icon="newItem" label="Nuevo elemento"></small-button><small-button menu icon="easy" label="Fácil acceso"></small-button></div></ribbon-group>
 <ribbon-group label="Abrir" style="--w:203px;--p:6px"><big-button menu icon="propsBig" label="Propiedades" style="--w:90px"></big-button><div class="col" style="padding-left:5px"><small-button menu icon="excelBig" label="Abrir" style="--h:34px"></small-button><small-button icon="edit" label="Editar" style="--h:33px"></small-button><small-button icon="history" label="Historial" style="--h:33px"></small-button></div></ribbon-group>
 <ribbon-group label="Seleccionar" style="--w:215px;--p:8px"><div class="col"><small-button icon="selAll" label="Seleccionar todo"></small-button><small-button icon="selNone" label="No seleccionar ninguno"></small-button><small-button icon="selInv" label="Invertir selección"></small-button></div></ribbon-group>
 </div>
 <div class="addr"><div class="nav"><button aria-label="Atrás">${ic('back')}</button><button style="margin-left:26px" aria-label="Adelante">${ic('fwd')}</button><button style="margin-left:20px" aria-label="Recientes">${ic('navDown')}</button><button style="margin-left:18px" aria-label="Arriba">${ic('navUp')}</button></div>
 <div class="path">${ic('folder')}${c('Este equipo')}${c('Documentos')}${c('UiPath')}${c('Consolidacion de recaudos por caja')}${c('Data')}${ic('crumb')}<div class="e"><button aria-label="Ubicaciones">${ic('boxDown')}</button><button aria-label="Actualizar">${ic('refresh')}</button></div></div>
 <label class="srch">${ic('search')}<input type="text" placeholder="Buscar en Data" aria-label="Buscar en Data"></label></div>
 <div class="main"><nav class="tree">${T('desktop','Desktop','pin')}${T('down','Descargas','pin')}${T('docs','Documentos','pin')}${T('images','Imágenes','pin')}${T('netFolder','6230-E-TE','pin')}${T('folder','Bot Conciliaciones')}${T('folder','Data','selected')}${T('folder','Diana')}${T('folder','Informacion_Consignacion_30112022')}<div class="gap"></div>${T('oneDrive','OneDrive - Grupo EPM','top closed')}<div class="gap"></div>${T('pc','Este equipo','top open')}${T('down','Descargas','closed')}${T('desktop','Desktop','closed')}${T('docs','Documentos','closed')}${T('images','Imágenes','closed')}${T('music','Música','closed')}${T('cube','Objetos 3D','closed')}${T('videos','Videos','closed')}${T('diskC','Disco local (C:)','closed')}${T('diskD','Disco local (D:)','closed')}</nav>
 <div class="sb"><div class="u">${ic('sbUp')}</div><div class="th"></div><div class="d">${ic('sbDown')}</div></div>
 <file-table></file-table></div>
 <div class="st"><span>5 elementos</span><i></i><span>1 elemento seleccionado</span><span style="margin-left:12px">19,9 KB</span><i></i><div class="vw"><button class="a" aria-label="Detalles">${ic('viewList')}</button><button aria-label="Iconos">${ic('images')}</button></div></div>`});

/* ---------- studio ---------- */
define('studio-button',`:host{display:block;width:var(--w);color:#333}
 button{display:flex;flex-direction:column;align-items:center;width:100%;height:100%;padding-top:4px;text-align:center}
 .i{height:24px;display:flex;align-items:center;margin-bottom:7px}
 span{line-height:15px;white-space:nowrap}
 :host([off]){color:#a0a0a0}:host([on]){background:#cbccd0;color:#949599}
 i ui-icon{margin-left:3px;vertical-align:middle}`,
 el=>`<button><div class="i">${ic(el.getAttribute('icon'))}</div><span>${el.getAttribute('label').replace('|','<br>')}${el.hasAttribute('menu')?`<i>${ic('tinyDown')}</i>`:''}</span></button>`);
define('side-tab',`:host{display:block}
 button{writing-mode:vertical-rl;display:flex;align-items:center;justify-content:flex-start;gap:6px;width:33px;color:#666;white-space:nowrap;border-left:6px solid #ececee;padding-right:4px;line-height:15px}
 :host([right]) button{border-left:0;border-right:5px solid #ececee;padding:0 0 0 7px}
 ui-icon{writing-mode:horizontal-tb}`,
 el=>`<button>${el.getAttribute('icon')?ic(el.getAttribute('icon')):''}<span>${el.getAttribute('label')}</span></button>`);
define('flow-node',`:host{position:absolute;display:flex;flex-direction:column;background:#fff;border:1px solid #dcdcdc;border-radius:2px;color:#666}
 header{height:21px;flex:none;background:#f4f6f6;border-bottom:1px solid #d5d5d8;display:flex;align-items:center;gap:8px;padding-left:2px;color:#333}
 :host([active]){border:1px solid #a9cfec}:host([active]) header{background:#c1daed;border-color:#a9cfec}
 .b{padding:7px 0 0 21px;line-height:17px;white-space:nowrap}
 .f{margin-top:auto;display:flex;justify-content:space-between;align-items:flex-end;padding:0 17px 7px 15px}`,
 el=>`<header>${ic(el.getAttribute('icon')||'state')}<span>${el.getAttribute('label')}</span></header><div class="b"><slot></slot></div><div class="f">${ic('enter')}${ic('grip')}</div>`);
define('flow-label',`:host{position:absolute;height:20px;border:2px solid #cdced0;border-radius:10px;background:#fff;color:#3c4b64;line-height:15px;padding:0 4px;white-space:nowrap;text-align:center;box-sizing:border-box}`,`<slot></slot>`);
define('flow-chart',`:host{display:flex;flex-direction:column;width:634px;margin:20px auto 0;border:1px solid #d5d5d8;border-bottom:0;border-radius:3px 3px 0 0;position:relative;overflow:hidden;color:#666}
 header{height:22px;background:#f4f6f6;border-bottom:1px solid #d5d5d8;display:flex;align-items:center;gap:8px;padding-left:2px;color:#333}
 .t{padding:5px 0 0 21px;line-height:17px;white-space:nowrap}
 svg{position:absolute;left:0;top:0;overflow:visible}
 .l{fill:none;stroke:#d2d3d6;stroke-width:2}.a{fill:#a8a8a8}.p{fill:#f2f4f4;stroke:#ccc;stroke-width:1.3}
 .s{position:absolute;left:26px;top:132px;width:60px;height:76px;border:1px solid #d2d3d6;border-radius:3px;background:#fff;display:flex;flex-direction:column;align-items:center;color:#333;padding-top:10px}`,
 `<header>${ic('proc')}<span>General Business Process</span></header>
 <div class="t">[Process title]<br>[Process description]<br>[Additional information (e.g., author, contact information and applications involved and required external setup)]</div>
 <flow-node active label="Initialization" style="left:265px;top:100px;width:222px;height:124px">Read configuration file and<br>initialize applications used in the<br>process.</flow-node>
 <flow-node label="End Process" icon="stateEnd" style="left:18px;top:319px;width:176px;height:106px">End process and close all<br>applications used.</flow-node>
 <flow-node label="Get Transaction Data" style="left:272px;top:309px;width:208px;height:106px">Get the next transaction to be<br>processed.</flow-node>
 <flow-node label="Process Transaction" style="left:260px;top:531px;width:232px;height:190px">Process a single transaction.<br>The result of the processing can be:<br>1) Success, 2) Business Exception, 3)<br>System Exception.<br>In the case of a system exception,<br>the transaction can be automatically<br>retried.</flow-node>
 <div class="s">${ic('start')}<span>Start</span></div>
 <svg width="632" height="780" viewBox="2556 186 632 780"><g class="l"><path d="M2643 350h28v3h140"/><path d="M2942 412v27M2942 439h-294q-4 0-4 4v52M2942 439v46"/><path d="M3050 353h18q4 0 4 4v562q0 4-4 4h-156q-4 0-4-4v-10"/><path d="M2931 603v105M2931 629h-284q-4 0-4-4v-6"/></g>
 <g class="a"><path d="M2810 348v10l11-5zM3053 348v10l-11-5zM2638 493h11l-5.500 11zM2936 483h11l-5.500 11zM2926 705h11l-5.500 11zM2638 620h11l-5.500-11z"/></g></svg>
 <flow-label style="left:192px;top:242px;width:91px">System Excep...</flow-label><flow-label style="left:353px;top:268px;width:65px">Successful</flow-label><flow-label style="left:205px;top:432px;width:55px">No Data</flow-label><flow-label style="left:331px;top:460px;width:91px">New Transacti...</flow-label>
 <flow-label style="left:472px;top:442px;width:91px">System Excep...</flow-label><flow-label style="left:465px;top:534px;width:91px">Business Exce...</flow-label>
 <svg width="632" height="780" viewBox="2556 186 632 780"><g class="l"><path d="M3044 535h17q4 0 4 4v382q0 4-4 4h-126q-4 0-4-4v-12M3044 562h17q4 0 4 4"/></g><g class="a"><path d="M3046 530v10l-11-5zM3046 557v10l-11-5z"/></g><g class="p"><ellipse cx="2942" cy="409" rx="5" ry="5"/><ellipse cx="2931" cy="600" rx="5" ry="5"/><ellipse cx="2908" cy="906" rx="5" ry="5"/><ellipse cx="2931" cy="906" rx="5" ry="5"/></g></svg>
 <flow-label style="left:485px;top:546px;width:51px">Success</flow-label>`);
define('studio-window',`:host{display:flex;flex-direction:column;flex:1;min-width:0;background:#f4f6f6;font-size:11px;color:#444}
 .title{display:grid;grid-template-columns:1fr auto 1fr;height:31px;align-items:center;background:#1a76d4;color:#fff;border-top:1px solid #134f8c;border-bottom:1px solid #b5d3f0}
 .mt{display:flex;align-items:stretch;height:100%}.mt button{text-align:center;color:#e8f1fb}.mt .on{background:#fbfbfb;color:#1976d2}
 .wc{display:flex;justify-content:flex-end;align-items:center;padding-right:17px}.wc button{line-height:0}
 .rib{display:flex;height:76px;background:#fbfbfb;border-bottom:2px solid #e8e9ea;padding:3px 6px 0 5px}
 .v{width:1px;background:#e0e0e0;margin:0 0 2px}
 .c{padding-top:1px}
 .c button{display:flex;align-items:center;height:24px;color:#a0a0a0;white-space:nowrap}.c button.k{color:#333}
 .c span{width:22px;flex:none;display:flex;justify-content:center;padding-right:2px}
 .body{flex:1;display:flex;min-height:0}
 .side{width:33px;display:flex;flex-direction:column;gap:13px;padding-top:5px;flex:none}
 .mid{flex:1;display:flex;flex-direction:column;min-width:0}
 .tabs{display:flex;height:29px;padding-top:5px;border-bottom:2px solid #3b8cd8}
 .tabs button{display:flex;align-items:center;color:#333;padding:2px 6px 0;white-space:nowrap}.tabs .on{background:#1976d2;color:#fff;justify-content:space-between;padding-right:8px;width:130px}
 .bc{height:29px;display:flex;align-items:center;background:#fff;border-bottom:1px solid #dcdcdc;padding:0 5px 0 6px;gap:9px;color:#444}
 .cv{flex:1;display:flex;background:#fff;min-height:0;overflow:hidden}
 .in{flex:1;display:flex;padding-bottom:5px}
 .sb{width:16px;display:flex;flex-direction:column;gap:1px;padding:2px 1px 6px 0}
 .sb div{border:1px solid #b8b8b8;height:15px;display:flex;align-items:center;justify-content:center}.sb .th{flex:1;margin-bottom:78px}
 .vb{height:22px;background:#f1f1f1;display:flex;align-items:center;padding:0 6px;gap:18px;color:#333;border-bottom:1px solid #e8e8e8}
 .z{margin-left:auto;display:flex;align-items:center;gap:12px}
 .z label{display:flex;align-items:center;width:69px;justify-content:space-between;margin-right:4px}
 select{font:inherit;color:#333;border:0;background:none;appearance:none;width:50px;padding:0}
 .bt{height:34px;display:flex;gap:12px;padding:8px 0 0 33px;color:#666}
 .bt button{border-bottom:5px solid #ececee;height:26px;line-height:20px;padding-bottom:1px}
 .st{height:23px;background:#c85a00;color:#fff;display:flex;align-items:center;justify-content:flex-end;gap:15px;padding-right:17px;border-top:1px solid #e08a4a}
 .st button{display:flex;align-items:center;gap:5px;white-space:nowrap}
 .st .x{width:184px;margin-left:4px}.st b{font-weight:600}`,
 ()=>{const B=(i,l,w,x='')=>`<studio-button ${x} icon="${i}" label="${l}" style="--w:${w}px"></studio-button>`;
 const s=(i,l,k='')=>`<button class="${k}"><span>${ic(i)}</span>${l}</button>`;
 return `<div class="title"><div class="mt"><button style="width:70px">INICIO</button><button style="width:80px">DISEÑO</button><button class="on" style="width:89px">DEPURAR</button></div><div>Consolidacion de recaudos por caja - UiPath Studio</div>
 <div class="wc"><button aria-label="Buscar">${ic('sSearch')}</button><button style="margin-left:14px" aria-label="Comentarios">${ic('feedback')}</button><button style="margin-left:11px" aria-label="Ayuda">${ic('sHelp')}</button><button style="margin-left:8px" aria-label="Cuenta">${ic('avatar')}</button><button style="margin-left:23px" aria-label="Minimizar">${ic('sMin')}</button><button style="margin-left:32px" aria-label="Restaurar">${ic('sMax')}</button><button style="margin-left:32px" aria-label="Cerrar">${ic('sClose')}</button></div></div>
 <div class="rib">${B('pause','Interrumpir',66)}${B('stop','Detener',56)}<div class="v" style="margin-left:5px;margin-right:9px"></div>
 <div class="c" style="width:94px">${s('stepIn','Entrar en')}${s('stepOver','Entrar sobre')}${s('stepOut','Salir de')}</div><div class="c" style="width:84px">${s('retry','Reintentar')}${s('ignore','Ignorar')}${s('restart','Reiniciar','k')}</div><div class="c" style="width:73px">${s('focus','Enfoque')}</div>
 ${B('bp','Puntos de|interrupción',78,'menu')}${B('slow','Paso|lento',37)}${B('trail','Seguimiento|de Ejecución',78,'off')}${B('marker','Elementos|destacados',70,'off')}<div style="width:3px"></div>${B('logs','Actividades|del registro',68,'on')}<div style="width:4px"></div>${B('contEx','Continuar en|Excepción',74,'on')}${B('pip','Imagen|en imagen',70,'off')}<div class="v" style="margin-left:5px;margin-right:2px"></div>${B('openLogs','Abrir|registros',66)}<div class="v"></div><div style="margin-left:auto;align-self:flex-end;padding-bottom:2px">${ic('sChevUp')}</div></div>
 <div class="body"><div class="side"><side-tab icon="project" label="Proyecto"></side-tab><side-tab icon="activities" label="Actividades"></side-tab><side-tab icon="snippets" label="Fragmentos"></side-tab><side-tab label="Variables locales"></side-tab><side-tab label="Inspección"></side-tab><side-tab label="Inmediato"></side-tab></div>
 <div class="mid"><div class="tabs"><button class="on"><span>Main (SoloLectura)</span>${ic('tabX')}</button><button style="width:144px">Process (SoloLectura)</button><button>Consolidar recaudos (SoloLectura)</button><div style="margin-left:auto;padding:9px 3px 0 0">${ic('sChevDown')}</div></div>
 <div class="bc"><a href="#">Main</a>${ic('sCrumb')}<a href="#">General Business ...</a><a href="#" style="margin-left:auto;color:#777">Expandir todo</a><a href="#" style="color:#777">Contraer todo</a></div>
 <div class="cv"><div class="in"><flow-chart></flow-chart></div><div class="sb"><div>${ic('sbTri')}</div><div class="th"></div><div>${ic('sbTriD')}</div></div></div>
 <div class="vb"><a href="#">Variables</a><a href="#">Argumentos</a><a href="#">Importaciones</a><div class="z">${ic('hand')}${ic('zoomI')}<label><select aria-label="Zoom"><option>100%</option></select>${ic('caret')}</label>${ic('fit')}${ic('over')}</div></div></div>
 <div class="side"><side-tab right icon="wrench" label="Propiedades"></side-tab><side-tab right icon="repo" label="Repositorio de objetos"></side-tab><side-tab right icon="outline" label="Esquema"></side-tab><side-tab right icon="coverage" label="Cobertura de actividad"></side-tab></div></div>
 <div class="bt"><button>Buscar referencias</button><button>Salida</button><button>Pila de llamadas</button><button>Puntos de interrupción</button></div>
 <div class="st"><button aria-label="Orquestador">${ic('stDb')}${ic('stCaret')}</button><button style="margin:0 14px 0 16px">Recaudos${ic('stCaret')}</button><button>${ic('stUp')}8</button><button>${ic('stPen')}4</button><button class="x">${ic('stRepo')}Consolidacion de recaudos por c</button><button>${ic('stGit')}main${ic('stCaret')}</button><button><b>C#, Windows (.NET Framework 4.6.1)</b></button></div>`});
</script>
</body>
</html>
